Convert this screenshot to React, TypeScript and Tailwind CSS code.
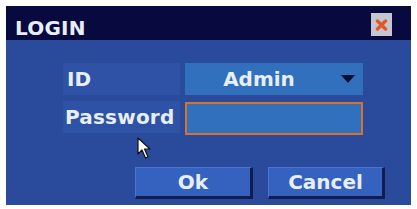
export default function App() {
  return (
    <div className="w-[417px] h-[209px] bg-white p-[6px] relative font-['DejaVu_Sans',sans-serif] font-bold text-[20px] text-[#e8eef8]">
      <div className="w-[405px] h-[199px] flex flex-col bg-[#2a4a9c]">
        {/* title bar */}
        <div className="h-[34px] bg-[#08093f] flex items-start pl-[9px] pr-[19px] pt-[12px] leading-[20px]">
          <span className="flex-1 tracking-[0.2px]">LOGIN</span>
          <div className="-mt-[5px] w-[21px] h-[23px] bg-[#c6c6d0] flex items-center justify-center">
            <svg width="13" height="12" viewBox="0 0 13 12">
              <path d="M2.5 2 L10.5 10 M10.5 2 L2.5 10" stroke="#e05a28" strokeWidth="3.4" strokeLinecap="round" />
            </svg>
          </div>
        </div>

        {/* form */}
        <div className="pt-[23px] pl-[57px] pr-[48px] grid grid-cols-[117px_178px] gap-x-[5px] gap-y-[6px] leading-[20px]">
          <div className="h-[32px] bg-[#2d52a6] flex items-center pl-[4px]">ID</div>
          <div className="h-[32px] bg-[#3070bd] flex items-center">
            <span className="flex-1 text-center">Admin</span>
            <div className="w-[30px] flex justify-center">
              <svg width="14" height="8" viewBox="0 0 14 8">
                <path d="M0 0 H14 L7 8 Z" fill="#0a0f2e" />
              </svg>
            </div>
          </div>
          <div className="h-[32px] bg-[#2d52a6] flex items-center pl-[2px] tracking-[0.2px]">Password</div>
          <div className="h-[33px] mt-[1px] bg-[#3070bd] border-2 border-[#d8702e]" />
        </div>

        {/* buttons */}
        <div className="mt-[32px] flex justify-end gap-[15px] pr-[26px] leading-[20px]">
          <button className="w-[118px] h-[32px] bg-[#3561bf] border-t border-l border-t-[#4a76d0] border-l-[#4a76d0] border-r-[3px] border-b-[3px] border-r-[#121c52] border-b-[#121c52] flex items-center justify-center">
            Ok
          </button>
          <button className="w-[117px] h-[32px] bg-[#3561bf] border-t border-l border-t-[#4a76d0] border-l-[#4a76d0] border-r-[3px] border-b-[3px] border-r-[#121c52] border-b-[#121c52] flex items-center justify-center">
            Cancel
          </button>
        </div>
      </div>

      {/* mouse pointer */}
      <svg className="absolute left-[137px] top-[137px]" width="15" height="23" viewBox="0 0 15 23">
        <path d="M1 1 L1 17 L5 13 L8.5 21 L11 20 L7.5 12 L13 12 Z" fill="#ffffff" stroke="#111111" strokeWidth="1.2" strokeLinejoin="round" />
      </svg>
    </div>
  );
}
